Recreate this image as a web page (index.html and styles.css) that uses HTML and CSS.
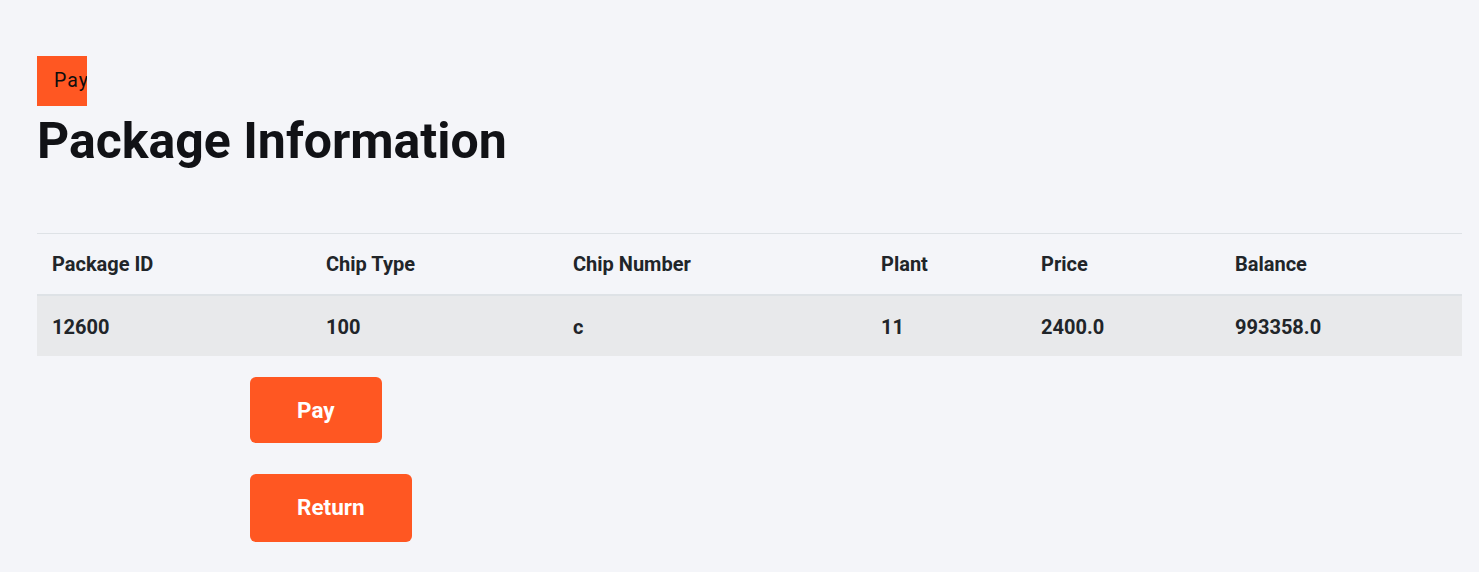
FILE: index.html
```html
<!DOCTYPE html>
<html>
<head>
<meta charset="utf-8">
<link rel="stylesheet" href="styles.css">
</head>
<body>
<div class="page">
  <div class="tag">Pay</div>
  <h1 class="title">Package Information</h1>
  <table class="info">
    <thead>
      <tr>
        <th class="c1">Package ID</th>
        <th class="c2">Chip Type</th>
        <th class="c3">Chip Number</th>
        <th class="c4">Plant</th>
        <th class="c5">Price</th>
        <th class="c6">Balance</th>
      </tr>
    </thead>
    <tbody>
      <tr>
        <td>12600</td>
        <td>100</td>
        <td>c</td>
        <td>11</td>
        <td>2400.0</td>
        <td>993358.0</td>
      </tr>
    </tbody>
  </table>
  <div class="actions">
    <button class="btn btn-pay">Pay</button>
    <button class="btn btn-return">Return</button>
  </div>
</div>
</body>
</html>
```
FILE: styles.css
```css
html, body {
  margin: 0;
  padding: 0;
  background: #f4f5f9;
  font-family: Roboto, "Liberation Sans", sans-serif;
  color: #16171b;
}
.page {
  padding: 56px 17px 0 37px;
}
.tag {
  width: 50px;
  height: 50px;
  box-sizing: border-box;
  background: #ff5722;
  padding-left: 17px;
  font-size: 19.5px;
  line-height: 50px;
  letter-spacing: 1px;
  color: #0e0e0e;
  overflow: hidden;
  white-space: nowrap;
}
.title {
  margin: 5px 0 0 0;
  font-size: 50px;
  line-height: 60px;
  font-weight: 700;
  color: #111216;
}
.info {
  margin-top: 62px;
  width: 100%;
  border-collapse: collapse;
  font-size: 20px;
  color: #212529;
}
.info th, .info td {
  text-align: left;
  font-weight: 700;
  line-height: 27px;
}
.info th {
  padding: 17px 15px 16px;
  border-top: 1px solid #dee2e6;
  border-bottom: 2px solid #dee2e6;
}
.info td {
  padding: 18px 15px 15px;
  background: #e8e9eb;
}
.c1 { width: 244px; }
.c2 { width: 217px; }
.c3 { width: 278px; }
.c4 { width: 130px; }
.c5 { width: 164px; }
.actions {
  margin-left: 213px;
  padding-top: 21px;
  display: flex;
  flex-direction: column;
  align-items: flex-start;
  gap: 31px;
}
.btn {
  background: #ff5722;
  color: #fff;
  border: none;
  border-radius: 6px;
  font-family: Roboto, "Liberation Sans", sans-serif;
  font-weight: 700;
  font-size: 22.5px;
  line-height: 26px;
  padding: 20px 47px;
}
.btn-return {
  padding: 20px 47px 22px;
}
```
